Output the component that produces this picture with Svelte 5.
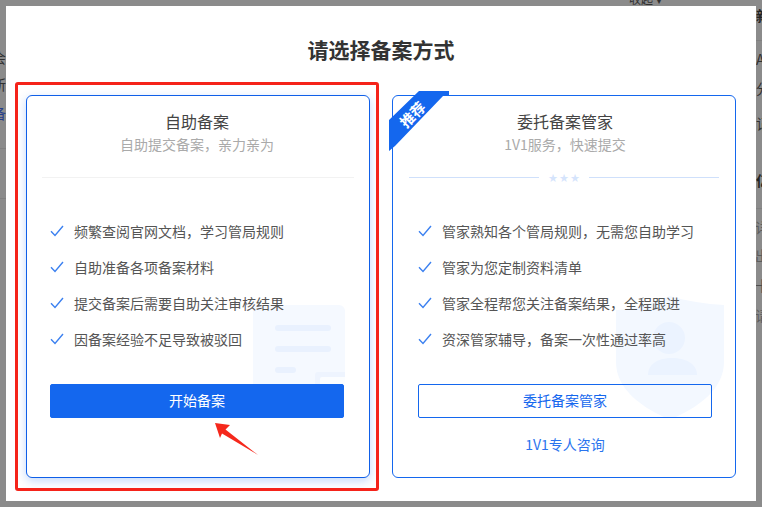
<script>
	const cards = [
		{
			title: '自助备案',
			sub: '自助提交备案，亲力亲为',
			items: ['频繁查阅官网文档，学习管局规则', '自助准备各项备案材料', '提交备案后需要自助关注审核结果', '因备案经验不足导致被驳回'],
			action: '开始备案',
			self: true
		},
		{
			title: '委托备案管家',
			sub: '1V1服务，快速提交',
			items: ['管家熟知各个管局规则，无需您自助学习', '管家为您定制资料清单', '管家全程帮您关注备案结果，全程跟进', '资深管家辅导，备案一次性通过率高'],
			action: '委托备案管家',
			link: '1V1专人咨询',
			self: false
		}
	];

	// bits of the page behind the dialog that stick out at the edges
	const behind = [
		{ t: '会', x: -8, y: 49, c: '#222' },
		{ t: '所', x: -8, y: 76, c: '#222' },
		{ t: '备', x: -8, y: 105, c: '#12318a' },
		{ t: '新', x: 756, y: 7, c: '#111', b: true },
		{ t: 'A', x: 756, y: 51, c: '#222' },
		{ t: '分', x: 756, y: 80, c: '#222' },
		{ t: '记', x: 756, y: 115, c: '#222' },
		{ t: '亿', x: 756, y: 172, c: '#111', b: true },
		{ t: '详', x: 755, y: 219, c: '#555' },
		{ t: '出', x: 755, y: 247, c: '#555' },
		{ t: '十', x: 755, y: 277, c: '#444' },
		{ t: '请', x: 755, y: 307, c: '#555' }
	];
	const lines = [
		{ x: 0, y: 148 },
		{ x: 0, y: 198 },
		{ x: 756, y: 40 },
		{ x: 756, y: 208 }
	];
</script>

<div class="page">
	{#each lines as l}
		<i class="line" style:left={l.x + 'px'} style:top={l.y + 'px'}></i>
	{/each}
	{#each behind as b}
		<span class="behind" class:bold={b.b} style:left={b.x + 'px'} style:top={b.y + 'px'} style:color={b.c}>{b.t}</span>
	{/each}
	<span class="behind fold">收起 ▾</span>

	<section class="modal">
		<h2>请选择备案方式</h2>
		<div class="cards">
			{#each cards as card}
				<article class="card" class:self={card.self}>
					{#if card.self}
						<svg class="mark doc" viewBox="0 0 92 79" width="92" height="79">
							<path d="M6 0H86a6 6 0 0 1 6 6V79H0V6a6 6 0 0 1 6-6z" fill="#f5f9ff" />
							<rect x="22" y="20" width="56" height="6" rx="3" fill="#e9f1fe" />
							<rect x="22" y="41" width="56" height="6" rx="3" fill="#e9f1fe" />
							<rect x="22" y="62" width="21" height="6" rx="3" fill="#e9f1fe" />
							<path d="M62 79V70a3 3 0 0 1 3-3H92V79z" fill="#eef4fe" />
							<path d="M67 79V74a2 2 0 0 1 2-2H92V79z" fill="#fbfdff" />
						</svg>
					{:else}
						<svg class="mark shield" viewBox="0 0 108 122" width="108" height="122">
							<path d="M54 0C70 5 90 8 108 9V66C108 92 84 110 60 121a14 14 0 0 1-12 0C24 110 0 92 0 66V14C18 13 38 7 54 0z" fill="#f3f8ff" />
							<circle cx="53" cy="42" r="16" fill="#ebf3ff" />
							<path d="M32 79C32 68 42 62 56 62S81 68 81 79z" fill="#ebf3ff" />
						</svg>
						<svg class="ribbon" viewBox="0 0 60 60" width="60" height="60">
							<path d="M0 29L30 0H60V5H54L6 55L0 60z" fill="#1467ee" />
							<text x="0" y="0" transform="translate(23 23) rotate(-45)" text-anchor="middle" dominant-baseline="central">推荐</text>
						</svg>
					{/if}

					<h3>{card.title}</h3>
					<p class="sub">{card.sub}</p>

					{#if card.self}
						<div class="rule plain"></div>
					{:else}
						<div class="rule">
							<i></i>
							<span class="stars">★ ★ ★</span>
							<i></i>
						</div>
					{/if}

					<ul>
						{#each card.items as item}
							<li>
								<svg viewBox="0 0 14 12" width="14" height="12">
									<path d="M1 6.2L5 10.4L13 1" fill="none" stroke="#3b80f0" stroke-width="1.4" />
								</svg>
								{item}
							</li>
						{/each}
					</ul>

					<button class:solid={card.self}>{card.action}</button>
					{#if card.link}
						<a href="#top">{card.link}</a>
					{/if}
				</article>
			{/each}
		</div>
	</section>

	<!-- annotations drawn on top of the screenshot -->
	<div class="frame"></div>
	<svg class="arrow" viewBox="0 0 50 40" width="50" height="40">
		<path d="M4 3L19 5L14.5 9.5L47 35L11 13.5L9 18z" fill="#f5281c" />
	</svg>
</div>

<style>
	:global(body) {
		margin: 0;
	}

	.page {
		position: relative;
		width: 762px;
		height: 507px;
		box-sizing: border-box;
		padding: 6px;
		overflow: hidden;
		background-color: #8b8b8b;
		font-family: 'Noto Sans CJK SC', 'Liberation Sans', sans-serif;
	}

	.line {
		position: absolute;
		width: 6px;
		height: 1px;
		background-color: #808080;
	}

	.behind {
		position: absolute;
		font-size: 14px;
		line-height: 16px;
		opacity: 0.85;
	}

	.bold {
		font-weight: 700;
	}

	.fold {
		left: 629px;
		top: -9px;
		font-size: 12px;
		color: #222;
		white-space: nowrap;
	}

	.modal {
		position: relative;
		box-sizing: border-box;
		height: 495px;
		padding: 28px 20px 0;
		background-color: #fff;
	}

	h2 {
		margin: 0 0 31px;
		font-size: 21px;
		line-height: 30px;
		font-weight: 700;
		text-align: center;
		color: #333;
	}

	.cards {
		display: grid;
		grid-template-columns: 344px 344px;
		gap: 22px;
	}

	.card {
		position: relative;
		display: flex;
		flex-direction: column;
		box-sizing: border-box;
		height: 383px;
		padding: 14px 14px 0 16px;
		border: 1px solid #1467ee;
		border-radius: 6px;
		background-color: #fff;
	}

	.self {
		padding: 14px 16px 0 14px;
		border-color: #0f5fe8;
		box-shadow: 0 3px 10px rgba(20, 103, 238, 0.25);
	}

	.mark {
		position: absolute;
	}

	.doc {
		left: 226px;
		top: 209px;
	}

	.shield {
		left: 223px;
		top: 200px;
	}

	.ribbon {
		position: absolute;
		left: -4px;
		top: -5px;
	}

	.ribbon text {
		font-size: 14.5px;
		font-weight: 700;
		fill: #fff;
	}

	h3 {
		position: relative;
		margin: 0;
		font-size: 16px;
		line-height: 22px;
		font-weight: 400;
		text-align: center;
		color: #444;
	}

	.sub {
		position: relative;
		margin: 1px 0 0;
		font-size: 14px;
		line-height: 22px;
		text-align: center;
		color: #aaa;
	}

	.rule {
		display: flex;
		align-items: center;
		gap: 9px;
		height: 1px;
		margin: 22px 2px 0 0;
	}

	.rule.plain {
		margin: 22px -1px 0 1px;
		background-color: #f2f2f2;
	}

	.rule i {
		flex: 1;
		height: 1px;
		background-color: #cfe0fb;
	}

	.stars {
		font-size: 9px;
		line-height: 10px;
		color: #d5e4fc;
	}

	ul {
		position: relative;
		margin: 35px 0 0;
		padding: 0 0 0 9px;
		list-style: none;
	}

	li {
		display: flex;
		align-items: center;
		gap: 10px;
		height: 36px;
		font-size: 14px;
		color: #555;
		white-space: nowrap;
	}

	button {
		position: relative;
		flex: none;
		box-sizing: border-box;
		height: 34px;
		margin: 27px 9px 0;
		padding: 0 0 2px;
		border: 1px solid #1467ee;
		border-radius: 2px;
		background: transparent;
		font: inherit;
		font-size: 14px;
		color: #1467ee;
	}

	button.solid {
		background-color: #1467ee;
		color: #fff;
	}

	a {
		margin-top: 16px;
		font-size: 14px;
		line-height: 20px;
		text-align: center;
		color: #2a74ee;
		text-decoration: none;
	}

	.frame {
		position: absolute;
		left: 15px;
		top: 82px;
		box-sizing: border-box;
		width: 364px;
		height: 409px;
		border: 3px solid #f5231a;
		border-radius: 3px;
	}

	.arrow {
		position: absolute;
		left: 211px;
		top: 420px;
	}
</style>
